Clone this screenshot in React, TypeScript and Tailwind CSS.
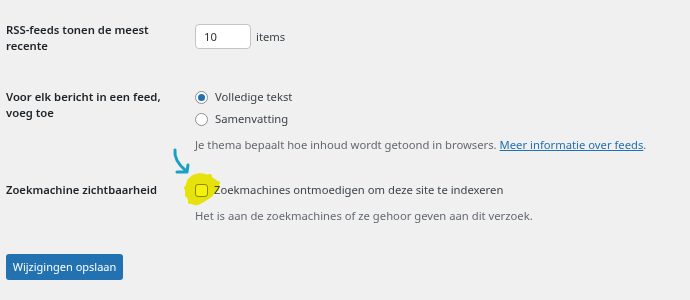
import React from "react";

const font = { fontFamily: '"Noto Sans", "Open Sans", sans-serif' };

function Radio({ checked, label }: { checked?: boolean; label: string }) {
  return (
    <div className="flex items-center h-[22px]">
      <span className="w-[13px] h-[13px] rounded-full border border-[#8c8f94] bg-white flex items-center justify-center">
        {checked ? <span className="w-[7px] h-[7px] rounded-full bg-[#2271b1]" /> : null}
      </span>
      <span className="ml-[7px] text-[#3c434a]">{label}</span>
    </div>
  );
}

export default function App() {
  return (
    <div className="w-[690px] h-[300px] bg-[#f0f0f1] overflow-hidden relative text-[11.25px] leading-[16px]" style={font}>
      <div className="pt-[22px] pl-[6px]">
        {/* rss count */}
        <div className="flex items-start">
          <div className="w-[189px] text-[11.3px] font-semibold text-[#1d2327]">
            RSS-feeds tonen de meest<br />recente
          </div>
          <div className="flex items-center mt-[2px]">
            <div className="w-[56px] h-[25px] bg-white border border-[#c3c4c7] rounded-[4px] flex items-center pl-[8px] text-[#2c3338]">
              10
            </div>
            <span className="ml-[5px] text-[#3c434a]">items</span>
          </div>
        </div>

        {/* feed content */}
        <div className="flex items-start mt-[32px]">
          <div className="w-[189px] pt-[3px] text-[11.3px] font-semibold text-[#1d2327]">
            Voor elk bericht in een feed,<br />voeg toe
          </div>
          <div>
            <Radio checked label="Volledige tekst" />
            <Radio label="Samenvatting" />
            <p className="mt-[7px] text-[#646970]">
              Je thema bepaalt hoe inhoud wordt getoond in browsers.{" "}
              <span className="text-[#2271b1] underline">Meer informatie over feeds</span>.
            </p>
          </div>
        </div>

        {/* search engine */}
        <div className="flex items-start mt-[26px]">
          <div className="w-[189px] leading-[22px] text-[11.2px] font-semibold text-[#1d2327]">
            Zoekmachine zichtbaarheid
          </div>
          <div>
            <div className="flex items-center h-[22px] relative">
              <span className="w-[13px] h-[13px] rounded-[3px] border border-[#8c8f94] bg-white" />
              <span className="ml-[6px] text-[#3c434a]">Zoekmachines ontmoedigen om deze site te indexeren</span>
              {/* highlighter marks */}
              <svg className="absolute left-[-11px] top-[-7px] mix-blend-multiply" width="40" height="35" viewBox="0 0 40 35">
                <path
                  d="M9 3 C15 0 22 1 25 4 C30 6 36 9 35 14 C36 18 32 20 30 22 C26 27 20 30 14 33 C9 34 5 31 3 26 C0 21 1 16 2 12 C3 8 5 5 9 3 Z"
                  fill="#f4f10c"
                />
                <path d="M5 9 L26 4 M2 16 L34 11 M3 23 L33 17 M6 30 L27 23" stroke="#f4f10c" strokeWidth="4" strokeLinecap="round" />
              </svg>
            </div>
            <p className="mt-[7px] text-[#646970]">
              Het is aan de zoekmachines of ze gehoor geven aan dit verzoek.
            </p>
          </div>
        </div>

        <button className="mt-[30px] h-[26px] w-[117px] rounded-[3px] bg-[#2271b1] text-white text-[11px] leading-[16px]">
          Wijzigingen opslaan
        </button>
      </div>

      {/* hand-drawn arrow */}
      <svg className="absolute left-[170px] top-[145px]" width="24" height="32" viewBox="0 0 24 32">
        <path d="M5 5 C4 12 9 20 16 26" stroke="#1aa0c4" strokeWidth="3" fill="none" strokeLinecap="round" />
        <path d="M7 27 L17 27 L18 20" stroke="#1aa0c4" strokeWidth="3" fill="none" strokeLinecap="round" strokeLinejoin="round" />
      </svg>
    </div>
  );
}
